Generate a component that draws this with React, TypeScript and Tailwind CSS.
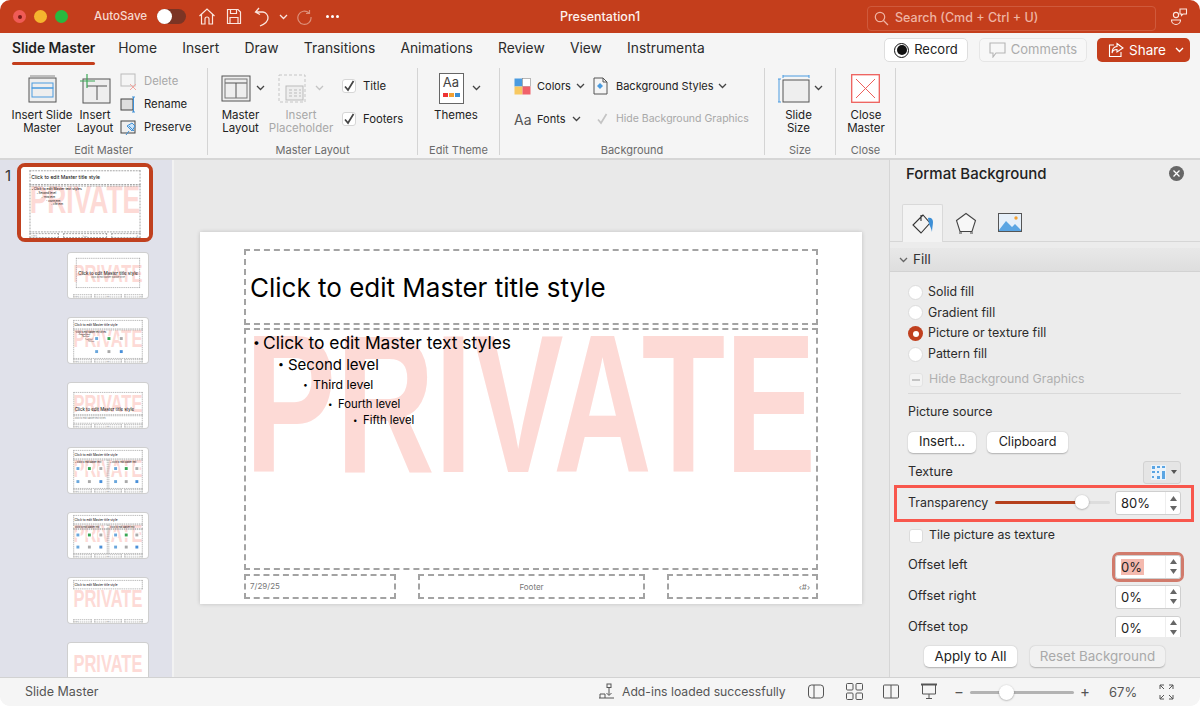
import React, { createContext, useContext } from "react";

const BorderW = createContext(2);

const Chev = ({ c = "#444", className = "" }: { c?: string; className?: string }) => (
  <svg width="9" height="6" viewBox="0 0 9 6" className={className}><path d="M1 1l3.5 3.5L8 1" fill="none" stroke={c} strokeWidth="1.3" /></svg>
);

const Big = ({ w, icon, lines, gray }: { w: number; icon: React.ReactNode; lines: string[]; gray?: boolean }) => (
  <div className="flex flex-col items-center shrink-0" style={{ width: w }}>
    <div className="h-[38px] shrink-0 flex items-center justify-center relative w-full">
      <div className="-mt-[3px] flex items-center justify-center">{icon}</div>
    </div>
    <div className={`text-[11.5px] leading-[13px] text-center whitespace-nowrap ${gray ? "text-[#a8a8a8]" : "text-[#222]"}`}>
      {lines.map((l) => <div key={l}>{l}</div>)}
    </div>
  </div>
);

const Group = ({ w, label, children }: { w: number; label: string; children: React.ReactNode }) => (
  <div className="flex shrink-0 h-full" style={{ width: w }}>
    <div className="flex flex-col flex-1 min-w-0">
      <div className="flex flex-1 min-h-0 pt-[3px]">{children}</div>
      <div className="h-[19px] text-[11px] leading-[23px] text-center text-[#6b6b6b]">{label}</div>
    </div>
    <div className="w-px bg-[#d4d4d4] mb-[3px] shrink-0" />
  </div>
);

const Watermark = () => (
  <div className="absolute left-[45px] top-[63px] text-[196px] leading-[220px] font-bold text-[#fddad6] origin-left scale-x-[0.696] whitespace-nowrap font-['Liberation_Sans',sans-serif]">PRIVATE</div>
);

const Box = ({ x, y, w, h, children }: { x: number; y: number; w: number; h: number; children?: React.ReactNode }) => {
  const bw = useContext(BorderW);
  return <div className="absolute border-dashed border-[#a3a3a3]" style={{ left: x, top: y, width: w, height: h, borderWidth: bw }}>{children}</div>;
};

const Footers = () => (
  <>
    <Box x={44} y={342} w={152} h={25}><div className="absolute left-[4px] top-[4px] text-[8px] leading-[12px] text-[#777]">7/29/25</div></Box>
    <Box x={218} y={342} w={227} h={25}><div className="text-center mt-[5px] text-[8px] leading-[12px] text-[#777]">Footer</div></Box>
    <Box x={467} y={342} w={151} h={25}><div className="absolute right-[6px] top-[5px] text-[8px] leading-[12px] text-[#777]">‹#›</div></Box>
  </>
);

const Lvl = ({ x, y, size, lh, t }: { x: number; y: number; size: number; lh: number; t: string }) => (
  <div className="absolute flex items-center whitespace-nowrap" style={{ left: x, top: y, fontSize: size, lineHeight: `${lh}px` }}>
    <span className="w-[10px] shrink-0 text-[0.7em]">•</span><span>{t}</span>
  </div>
);

const Body = () => (
  <div className="text-black relative">
    <Lvl x={7} y={0} size={17.4} lh={26} t="Click to edit Master text styles" />
    <Lvl x={32} y={24} size={15} lh={22} t="Second level" />
    <Lvl x={57} y={45} size={12.3} lh={20} t="Third level" />
    <Lvl x={82} y={65} size={11.3} lh={18} t="Fourth level" />
    <Lvl x={107} y={81} size={11.3} lh={18} t="Fifth level" />
  </div>
);

const Title = () => (
  <div className="absolute left-[4px] top-1/2 -translate-y-1/2 whitespace-nowrap text-black text-[26px]">Click to edit Master title style</div>
);

const IconGrid = ({ x, y, gap, rowGap }: { x: number; y: number; gap: number; rowGap: number }) => (
  <>
    {["#6aa7dc", "#3aa655", "#aaa", "#6aa7dc", "#aaa", "#4a90d9"].map((c, i) => (
      <div key={i} className="absolute w-[44px] h-[44px] rounded-[6px] bg-white flex items-center justify-center" style={{ left: x + (i % 3) * gap, top: y + Math.floor(i / 3) * rowGap }}>
        <div className="w-[24px] h-[24px]" style={{ background: c }} />
      </div>
    ))}
  </>
);

const Slide = ({ v }: { v: string }) => (
  <div className="w-[662px] h-[372px] relative bg-white overflow-hidden">
    <Watermark />
    {v === "master" && (
      <>
        <Box x={44} y={17} w={574} h={76}><Title /></Box>
        <Box x={44} y={96} w={574} h={242}><Body /></Box>
        <Footers />
      </>
    )}
    {v === "title" && (
      <>
        <Box x={66} y={41} w={530} h={248}>
          <div className="absolute left-0 right-0 top-[98px] text-center text-[36px] leading-[44px] text-black whitespace-nowrap">Click to edit Master title style</div>
          <div className="absolute left-0 right-0 top-[143px] text-center text-[18px] leading-[24px] text-[#555]">Click to edit Master subtitle style</div>
        </Box>
        <Footers />
      </>
    )}
    {v === "content" && (
      <>
        <Box x={44} y={17} w={574} h={76}><Title /></Box>
        <Box x={44} y={96} w={574} h={242}><Body /></Box>
        <IconGrid x={215} y={148} gap={102} rowGap={108} />
        <Footers />
      </>
    )}
    {v === "section" && (
      <>
        <Box x={45} y={75} w={573} h={190}><div className="absolute left-[4px] top-[116px] text-[36px] leading-[44px] text-black whitespace-nowrap">Click to edit Master title style</div></Box>
        <Box x={45} y={268} w={573} h={68}><div className="absolute left-[4px] top-[6px] text-[18px] leading-[24px] text-[#777]">Click to edit Master text styles</div></Box>
        <Footers />
      </>
    )}
    {v === "two" && (
      <>
        <Box x={44} y={17} w={574} h={76}><Title /></Box>
        <Box x={44} y={96} w={284} h={242}><div className="absolute left-[8px] top-[4px] text-[18px] leading-[24px] text-black whitespace-nowrap">• Click to edit Master text</div></Box>
        <Box x={335} y={96} w={283} h={242}><div className="absolute left-[8px] top-[4px] text-[18px] leading-[24px] text-black whitespace-nowrap">• Click to edit Master text</div></Box>
        <IconGrid x={60} y={148} gap={95} rowGap={108} />
        <IconGrid x={372} y={148} gap={88} rowGap={108} />
        <Footers />
      </>
    )}
    {v === "compare" && (
      <>
        <Box x={44} y={17} w={574} h={76}><Title /></Box>
        <Box x={44} y={96} w={284} h={36}><div className="absolute left-[8px] top-[2px] text-[18px] leading-[24px] text-black whitespace-nowrap">Click to edit Master text</div></Box>
        <Box x={335} y={96} w={283} h={36}><div className="absolute left-[8px] top-[2px] text-[18px] leading-[24px] text-black whitespace-nowrap">Click to edit Master text</div></Box>
        <Box x={44} y={134} w={284} h={204} />
        <Box x={335} y={134} w={283} h={204} />
        <IconGrid x={60} y={160} gap={95} rowGap={100} />
        <IconGrid x={372} y={160} gap={88} rowGap={100} />
        <Footers />
      </>
    )}
    {v === "only" && (
      <>
        <Box x={44} y={17} w={574} h={76}><Title /></Box>
        <Footers />
      </>
    )}
  </div>
);

const Thumb = ({ v }: { v: string }) => (
  <div className="relative w-[80px] h-[45px] rounded-[3px] overflow-hidden ring-1 ring-[#cfcfcf] ml-[68px] mb-[20px] shrink-0">
    <div className="absolute left-0 top-0 origin-top-left scale-[0.1208]">
      <BorderW.Provider value={6}><Slide v={v} /></BorderW.Provider>
    </div>
  </div>
);

const Spin = ({ v, sel }: { v: string; sel?: boolean }) => (
  <div className="w-[66px] h-[24px] bg-white rounded-[3px] border border-[#cfcfcf] flex items-center pl-[5px] shrink-0">
    <span className={`text-[13px] leading-[16px] text-[#222] ${sel ? "bg-[#f4b9ae] pr-[2px]" : ""}`}>{v}</span>
    <div className="ml-auto w-[15px] h-full flex flex-col items-center justify-center gap-[5px] border-l border-[#eee]">
      <svg width="7" height="5" viewBox="0 0 7 5"><path d="M3.5 0L7 5H0z" fill="#666" /></svg>
      <svg width="7" height="5" viewBox="0 0 7 5"><path d="M3.5 5L7 0H0z" fill="#666" /></svg>
    </div>
  </div>
);

const Radio = ({ label, on }: { label: string; on?: boolean }) => (
  <div className="h-[20.67px] flex items-center">
    {on ? (
      <div className="w-[15px] h-[15px] rounded-full bg-[#c0401f] flex items-center justify-center"><div className="w-[6px] h-[6px] rounded-full bg-white" /></div>
    ) : (
      <div className="w-[15px] h-[15px] rounded-full bg-white border border-[#dcdcdc]" />
    )}
    <span className="ml-[5px] text-[12.4px] text-[#2b2b2b]">{label}</span>
  </div>
);

const Btn = ({ children, w, gray, size = 13.2 }: { children: React.ReactNode; w: number; gray?: boolean; size?: number }) => (
  <div className={`h-[21px] rounded-[5px] flex items-center justify-center shrink-0 shadow-[0_0.5px_1.5px_rgba(0,0,0,0.25)] ${gray ? "bg-[#f1f1f1] text-[#a9a9a9]" : "bg-white text-[#222]"}`} style={{ width: w, fontSize: size }}>{children}</div>
);

const Check = ({ gray }: { gray?: boolean }) => (
  <div className={`w-[14px] h-[14px] rounded-[3px] border flex items-center justify-center shrink-0 ${gray ? "border-transparent" : "border-[#d6d6d6] bg-white"}`}>
    <svg width="12" height="12" viewBox="0 0 12 12"><path d="M2 6.5l3 3.5L10.5 1" fill="none" stroke={gray ? "#c4c4c4" : "#444"} strokeWidth="1.7" /></svg>
  </div>
);

const SmallRow = ({ icon, label, gray }: { icon: React.ReactNode; label: string; gray?: boolean }) => (
  <div className="h-[23px] flex items-center">
    <div className="w-[17px] h-[17px] shrink-0">{icon}</div>
    <span className={`ml-[7px] text-[11.3px] ${gray ? "text-[#a8a8a8]" : "text-[#222]"}`}>{label}</span>
  </div>
);

export default function App() {
  const tabs = ["Home", "Insert", "Draw", "Transitions", "Animations", "Review", "View", "Instrumenta"];
  return (
    <div className="w-[1200px] h-[706px] bg-white font-['Inter',sans-serif]">
      <div className="w-full h-full rounded-[10px] overflow-hidden flex flex-col bg-[#f5f5f5]">
        {/* Title bar */}
        <div className="h-[33px] bg-[#c43e1c] flex items-center shrink-0 relative pl-[13px]">
          <div className="w-[13px] h-[13px] rounded-full bg-[#ef5b56] flex items-center justify-center"><div className="w-[4px] h-[4px] rounded-full bg-[#7d1a17]" /></div>
          <div className="w-[13px] h-[13px] rounded-full bg-[#f5b52e] ml-[8px]" />
          <div className="w-[13px] h-[13px] rounded-full bg-[#28b83f] ml-[8px]" />
          <span className="ml-[26px] w-[52px] text-[11.6px] font-medium text-[#f6d9cf]">AutoSave</span>
          <div className="ml-[11px] w-[29px] h-[15px] rounded-full bg-[#7c3424] relative shrink-0"><div className="absolute left-0 top-0 w-[15px] h-[15px] rounded-full bg-white" /></div>
          <svg className="ml-[12px]" width="18" height="19" viewBox="0 0 18 19" fill="none" stroke="#fbe6df" strokeWidth="1.2"><path d="M1.5 9L9 2l7.5 7M3.5 7.5V17h3.5v-5a2 2 0 014 0v5h3.5V7.5" /></svg>
          <svg className="ml-[10px]" width="16" height="17" viewBox="0 0 16 17" fill="none" stroke="#fbe6df" strokeWidth="1.2"><path d="M1.5 1.5h10.5l2.5 2.5v11.5h-13zM4.5 1.5v4h6v-4M4 15.5V9.5h8v6" /></svg>
          <svg className="ml-[12px]" width="17" height="20" viewBox="0 0 17 20" fill="none" stroke="#fbe6df" strokeWidth="1.3"><path d="M5 1L1.5 5 6 7.5M2 5h7a6 6 0 015 6c0 3-3 6-8 8" /></svg>
          <Chev c="#fbe6df" className="ml-[8px]" />
          <svg className="ml-[8px]" width="16" height="16" viewBox="0 0 16 16" fill="none" stroke="#dd8f79" strokeWidth="1.2"><path d="M13 4a6.6 6.6 0 10 2 4M13.5 1v3.5H10" /></svg>
          <div className="ml-[14px] flex gap-[2px]"><i className="w-[3px] h-[3px] rounded-full bg-white" /><i className="w-[3px] h-[3px] rounded-full bg-white" /><i className="w-[3px] h-[3px] rounded-full bg-white" /></div>
          <div className="absolute left-[560px] top-[8px] text-[12.5px] leading-[17px] font-medium text-[#fdf1ed]">Presentation1</div>
          <div className="absolute right-[44px] top-[6px] w-[289px] h-[25px] rounded-[4px] border border-[#cf5a3c] flex items-center pl-[6px]">
            <svg width="15" height="15" viewBox="0 0 15 15" fill="none" stroke="#efb4a3" strokeWidth="1.2"><circle cx="6" cy="6" r="4.7" /><path d="M9.5 9.5l4.5 4.5" /></svg>
            <span className="ml-[6px] text-[12.5px] font-medium text-[#efb4a3]">Search (Cmd + Ctrl + U)</span>
          </div>
          <svg className="absolute right-[12px] top-[7px]" width="18" height="19" viewBox="0 0 18 19" fill="none" stroke="#fbe6df" strokeWidth="1.1"><circle cx="6" cy="8" r="2.6" /><path d="M1.5 13h9a4.5 4.5 0 01-9 0zM10 2h6.5v5H13l-1.5 1.5V7H10z" /></svg>
        </div>

        {/* Tabs */}
        <div className="h-[33px] flex items-center shrink-0 pl-[12px] relative">
          <div className="h-full relative flex items-center text-[13.85px] font-semibold text-[#1f1f1f] -mt-[3px]">
            Slide Master
            <div className="absolute left-0 right-0 bottom-0 h-[3px] rounded-full bg-[#c43e1c]" />
          </div>
          <div className="flex gap-[25.2px] ml-[23px] text-[13.8px] text-[#2b2b2b] -mt-[3px]">
            {tabs.map((t) => <span key={t}>{t}</span>)}
          </div>
          <div className="absolute left-[884px] top-[5px] w-[84px] h-[24px] rounded-[5px] bg-white border border-[#dedede] flex items-center justify-center gap-[5px]">
            <div className="w-[15px] h-[15px] rounded-full border border-[#111] flex items-center justify-center"><div className="w-[10px] h-[10px] rounded-full bg-[#111]" /></div>
            <span className="text-[13px] text-[#222]">Record</span>
          </div>
          <div className="absolute left-[979px] top-[5px] w-[108px] h-[24px] rounded-[5px] bg-[#f7f7f7] border border-[#e6e6e6] flex items-center justify-center gap-[5px]">
            <svg width="17" height="16" viewBox="0 0 17 16" fill="none" stroke="#b5b5b5" strokeWidth="1.1"><path d="M1 1h15v10H7l-3 4v-4H1z" /></svg>
            <span className="text-[13px] text-[#ababab]">Comments</span>
          </div>
          <div className="absolute left-[1097px] top-[5px] w-[93px] h-[24px] rounded-[5px] bg-[#c43e1c] flex items-center pl-[11px] gap-[4px]">
            <svg width="17" height="16" viewBox="0 0 17 16" fill="none" stroke="#fff" strokeWidth="1.1"><path d="M6 3H1.5v11.5H13V10M9 1.5l6 4.5-6 4V7.5C6 7.5 4.5 9 4 11c0-4 2-6.5 5-6.5z" /></svg>
            <span className="text-[13.5px] text-white">Share</span>
            <Chev c="#fff" className="ml-[5px]" />
          </div>
        </div>

        {/* Ribbon */}
        <div className="h-[94px] flex shrink-0 border-b-2 border-[#d6d6d6] pt-[2px]">
          <Group w={208} label="Edit Master">
            <div className="ml-[12px]" />
            <Big w={60} lines={["Insert Slide", "Master"]} icon={
              <svg width="29" height="28" viewBox="0 0 29 28" fill="none"><path d="M2 1h25" stroke="#888" /><rect x="1" y="3" width="27" height="24" fill="#eee" stroke="#555" /><rect x="4" y="8" width="21" height="5" fill="none" stroke="#4a9be0" /><rect x="4" y="13" width="21" height="9" fill="none" stroke="#4a9be0" /></svg>
            } />
            <div className="w-[5px]" />
            <Big w={36} lines={["Insert", "Layout"]} icon={
              <svg width="32" height="30" viewBox="0 0 32 30" fill="none"><rect x="4" y="5" width="27" height="24" fill="#eee" stroke="#555" /><path d="M8 12h20M18 12v14" stroke="#555" /><path d="M8 0v14M1 7h15" stroke="#3aa655" strokeWidth="1.2" /></svg>
            } />
            <div className="ml-[7px] flex flex-col -mt-[1px]">
              <SmallRow gray label="Delete" icon={<svg width="17" height="17" viewBox="0 0 17 17" fill="none"><rect x="1" y="1" width="14" height="12" stroke="#bbb" /><path d="M10 11l6 6M16 11l-6 6" stroke="#f3a7a0" /></svg>} />
              <SmallRow label="Rename" icon={<svg width="17" height="17" viewBox="0 0 17 17" fill="none"><rect x="1" y="3" width="12" height="11" fill="#ddd" stroke="#444" /><path d="M12 1h3M13.5 1v15M12 16h3" stroke="#3d8fd6" /></svg>} />
              <SmallRow label="Preserve" icon={<svg width="17" height="17" viewBox="0 0 17 17" fill="none"><rect x="1" y="2" width="14" height="12" fill="#eee" stroke="#444" /><path d="M6 16l3-4M9 7l5 5M12 4l3 3-3 5-5-5z" stroke="#3d8fd6" fill="#cfe4f7" /></svg>} />
            </div>
          </Group>
          <Group w={210} label="Master Layout">
            <div className="w-[9px]" />
            <div className="relative">
              <Big w={47} lines={["Master", "Layout"]} icon={
                <svg width="30" height="27" viewBox="0 0 30 27" fill="none" className="mr-[9px]"><rect x="1" y="1" width="28" height="25" fill="#eee" stroke="#555" /><path d="M4 8h22M15 8v15" stroke="#555" /><rect x="4" y="4" width="22" height="19" stroke="#777" /></svg>
              } />
              <Chev className="absolute left-[39px] top-[14px]" />
            </div>
            <div className="w-[6px]" />
            <div className="relative">
              <Big w={62} gray lines={["Insert", "Placeholder"]} icon={
                <svg width="28" height="30" viewBox="0 0 28 30" fill="none" className="mr-[18px]"><rect x="1" y="1" width="26" height="27" stroke="#c5c5c5" strokeDasharray="3 2" /><rect x="8" y="12" width="17" height="14" fill="#eee" stroke="#bbb" /><path d="M11 16h3M16 16h3M21 16h2M11 19h3M16 19h3M21 19h2M11 22h3M16 22h3M21 22h2" stroke="#bbb" /></svg>
              } />
              <Chev c="#c4c4c4" className="absolute left-[45px] top-[14px]" />
            </div>
            <div className="ml-[10px] flex flex-col pt-[5px]">
              <div className="h-[20px] flex items-center"><Check /><span className="ml-[7px] text-[11.3px] text-[#222]">Title</span></div>
              <div className="h-[20px] mt-[13px] flex items-center"><Check /><span className="ml-[7px] text-[11.3px] text-[#222]">Footers</span></div>
            </div>
          </Group>
          <Group w={82} label="Edit Theme">
            <div className="w-[20px]" />
            <div className="relative">
              <Big w={36} lines={["Themes"]} icon={
                <div className="w-[25px] h-[31px] bg-white border border-[#666] flex flex-col items-center mr-[10px]">
                  <span className="text-[13px] leading-[17px] text-[#444]">Aa</span>
                  <div className="flex gap-[1px] mt-[2px]"><i className="w-[5px] h-[4px] bg-[#e33]" /><i className="w-[5px] h-[4px] bg-[#f3a032]" /><i className="w-[5px] h-[4px] bg-[#3d8fd6]" /></div>
                </div>
              } />
              <Chev className="absolute left-[34px] top-[14px]" />
            </div>
          </Group>
          <Group w={265} label="Background">
            <div className="pl-[14px] pt-[5px] flex flex-col w-full">
              <div className="h-[20px] flex items-center">
                <svg width="17" height="17" viewBox="0 0 17 17"><rect width="8" height="8" x=".5" y=".5" fill="#4a9be0" /><rect width="8" height="8" x="8.5" y=".5" fill="#fff" stroke="#777" strokeWidth=".5" /><rect width="8" height="8" x=".5" y="8.5" fill="#f7c860" /><rect width="8" height="8" x="8.5" y="8.5" fill="#f0616a" /></svg>
                <span className="ml-[6px] w-[37px] text-[11px] text-[#222]">Colors</span>
                <Chev className="ml-[2px]" />
                <svg className="ml-[8px]" width="15" height="18" viewBox="0 0 15 18" fill="none" stroke="#555"><path d="M1 1h9l4 4v12H1zM10 1v4h4" /><path d="M4 9l3-3 3 3-3 3z" fill="#4a9be0" stroke="none" /></svg>
                <span className="ml-[8px] text-[11px] text-[#222]">Background Styles</span>
                <Chev className="ml-[4px]" />
              </div>
              <div className="h-[20px] mt-[13px] flex items-center">
                <span className="w-[17px] text-[14px] text-[#555]">Aa</span>
                <span className="ml-[6px] w-[31px] text-[11px] text-[#222]">Fonts</span>
                <Chev className="ml-[4px]" />
                <div className="ml-[14px]"><Check gray /></div>
                <span className="ml-[7px] text-[10.5px] text-[#a8a8a8]">Hide Background Graphics</span>
              </div>
            </div>
          </Group>
          <Group w={71} label="Size">
            <div className="w-[13px]" />
            <div className="relative">
              <Big w={41} lines={["Slide", "Size"]} icon={
                <svg width="32" height="28" viewBox="0 0 32 28" fill="none" className="mr-[10px]"><path d="M5 1h26M5 0v3M31 0v3M1 4v23M0 4h3M0 27h3" stroke="#4a9be0" /><rect x="5" y="5" width="26" height="22" fill="#eee" stroke="#555" /></svg>
              } />
              <Chev className="absolute left-[36px] top-[14px]" />
            </div>
          </Group>
          <Group w={60} label="Close">
            <div className="ml-[7px]" />
            <Big w={46} lines={["Close", "Master"]} icon={
              <svg width="29" height="29" viewBox="0 0 29 29" fill="none" className="mr-[2px]"><rect x=".7" y=".7" width="27.6" height="27.6" fill="#fff" stroke="#ee5f5b" strokeWidth="1.3" /><path d="M5 5l19 19M24 5L5 24" stroke="#ee5f5b" /></svg>
            } />
          </Group>
        </div>

        {/* Main */}
        <div className="flex-1 min-h-0 flex">
          <div className="w-[172px] bg-[#e0e1ea] shrink-0 overflow-hidden relative pt-[3px]">
            <div className="absolute left-[5px] top-[7px] text-[15px] leading-[18px] text-[#333]">1</div>
            <div className="ml-[17px] w-[136px] h-[79px] rounded-[8px] border-[4px] border-[#c0401f] bg-white overflow-hidden mb-[11px] relative">
              <div className="absolute left-0 top-0 origin-top-left scale-[0.1934]">
                <BorderW.Provider value={5}><Slide v="master" /></BorderW.Provider>
              </div>
            </div>
            <Thumb v="title" />
            <Thumb v="content" />
            <Thumb v="section" />
            <Thumb v="two" />
            <Thumb v="compare" />
            <Thumb v="only" />
            <Thumb v="blank" />
          </div>
          <div className="w-[2px] bg-[#f2f2f2] shrink-0" />
          <div className="flex-1 bg-[#e9e9e9] flex items-center justify-center min-w-0 pr-[1px] pb-[1px]">
            <div className="shadow-[0_0_4px_rgba(0,0,0,0.18)]"><Slide v="master" /></div>
          </div>
          <div className="w-[311px] shrink-0 bg-[#ececec] border-l border-[#d6d6d6] flex flex-col">
            <div className="h-[44px] shrink-0 flex items-start pt-[4px] pl-[16px] pr-[16px] justify-between">
              <span className="text-[15px] leading-[20px] font-medium text-[#222]">Format Background</span>
              <div className="w-[15px] h-[15px] rounded-full bg-[#666] flex items-center justify-center mt-[2px]">
                <svg width="7" height="7" viewBox="0 0 7 7"><path d="M.5.5l6 6M6.5.5l-6 6" stroke="#fff" strokeWidth="1.3" /></svg>
              </div>
            </div>
            <div className="h-[38px] shrink-0 flex border-b border-[#d6d6d6] pl-[12px]">
              <div className="w-[41px] h-[38px] bg-[#f3f3f3] border border-b-0 border-[#d9d9d9] rounded-t-[2px] flex items-center justify-center">
                <svg width="24" height="24" viewBox="0 0 24 24" fill="none"><path d="M12 3L2 13l8 8 9-10zM10 3v6" stroke="#333" strokeWidth="1.1" /><path d="M17 6c3-1 5 1 5 4 0 3-1 6-1 10-1-4-2-6-3-8z" fill="#3d8fd6" /></svg>
              </div>
              <div className="w-[46px] flex items-center justify-center">
                <svg width="22" height="22" viewBox="0 0 22 22" fill="none" stroke="#444" strokeWidth="1.1"><path d="M11 1.5l9.5 7-3.5 11H5l-3.5-11z" fill="#f7f7f7" /><path d="M4 21h3M15 21h3" /></svg>
              </div>
              <div className="w-[42px] flex items-center justify-center">
                <svg width="24" height="19" viewBox="0 0 24 19"><rect x=".5" y=".5" width="23" height="18" fill="#e6f0fa" stroke="#555" /><path d="M1 17l7-9 6 6 3-3 6 6v1H1z" fill="#5aa5e3" /><circle cx="18" cy="5" r="1.7" fill="#f3a032" /></svg>
              </div>
            </div>
            <div className="h-[24px] mt-[6px] shrink-0 bg-gradient-to-b from-[#e8e8e8] to-[#dedede] border-b border-[#d2d2d2] flex items-center pl-[9px]">
              <Chev c="#666" />
              <span className="ml-[5px] text-[13.5px] text-[#333]">Fill</span>
            </div>
            <div className="flex-1 min-h-0 overflow-hidden pl-[18px] pr-[19px] pt-[10px] relative">
              <Radio label="Solid fill" />
              <Radio label="Gradient fill" />
              <Radio on label="Picture or texture fill" />
              <Radio label="Pattern fill" />
              <div className="h-[20px] mt-[5px] flex items-center ml-[1px]">
                <div className="w-[14px] h-[14px] rounded-[3px] bg-[#f3f3f3] border border-[#e3e3e3] flex items-center justify-center"><div className="w-[8px] h-[2px] bg-[#c4c4c4]" /></div>
                <span className="ml-[6px] text-[12.3px] text-[#b0b0b0]">Hide Background Graphics</span>
              </div>
              <div className="h-px mt-[3px] bg-[#d9d9d9]" />
              <div className="h-[20px] mt-[9px] flex items-center text-[12.4px] text-[#2b2b2b]">Picture source</div>
              <div className="flex gap-[11px] mt-[9px]"><Btn w={68} size={13}>Insert...</Btn><Btn w={81} size={12.6}>Clipboard</Btn></div>
              <div className="h-[23px] mt-[8px] flex items-center justify-between">
                <span className="text-[12.6px] text-[#2b2b2b]">Texture</span>
                <div className="w-[38px] h-[23px] bg-[#e5e5e5] border border-[#d2d2d2] rounded-[3px] flex items-center pl-[7px] gap-[5px]">
                  <svg width="15" height="15" viewBox="0 0 15 15"><rect width="15" height="15" fill="#eaf3fb" /><path d="M1 1h3v3H1zM6 1h3v2H6zM11 1h3v2h-3zM1 6h3v2H1zM6 6h2v2H6zM1 11h2v2H1zM6 11h3v3H6zM11 6h3v8h-3z" fill="#5aa5e3" /></svg>
                  <svg width="6" height="4" viewBox="0 0 6 4"><path d="M0 0h6L3 4z" fill="#555" /></svg>
                </div>
              </div>
              <div className="h-[37px] mt-[1px] -ml-[14px] w-[300px] border-[3px] border-[#f8574d] flex items-center pl-[11px] pr-[10px]">
                <span className="text-[12.4px] text-[#2b2b2b] w-[87px]">Transparency</span>
                <div className="w-[115px] h-[3px] relative bg-[#dddddd] rounded-full -mt-[2px]">
                  <div className="absolute left-0 top-0 h-full w-[87px] bg-[#b5401c] rounded-full" />
                  <div className="absolute left-[80px] -top-[6px] w-[14px] h-[14px] rounded-full bg-white shadow-[0_0.5px_2px_rgba(0,0,0,0.35)]" />
                </div>
                <div className="ml-auto"><Spin v="80%" /></div>
              </div>
              <div className="h-[18px] mt-[5px] flex items-center ml-[1px]">
                <div className="w-[14px] h-[14px] rounded-[3px] bg-white border border-[#dcdcdc]" />
                <span className="ml-[6px] text-[12.3px] text-[#2b2b2b]">Tile picture as texture</span>
              </div>
              <div className="h-[24px] mt-[10px] flex items-center justify-between">
                <span className="text-[12.8px] text-[#2b2b2b] pb-[5px]">Offset left</span>
                <div className="rounded-[4px] ring-[3px] ring-[#d17b6c]"><Spin v="0%" sel /></div>
              </div>
              <div className="h-[24px] mt-[6px] flex items-center justify-between">
                <span className="text-[12.8px] text-[#2b2b2b] pb-[3px]">Offset right</span>
                <Spin v="0%" />
              </div>
              <div className="h-[24px] mt-[7px] flex items-center justify-between">
                <span className="text-[12.8px] text-[#2b2b2b] pb-[3px]">Offset top</span>
                <Spin v="0%" />
              </div>
            </div>
            <div className="h-[40px] shrink-0 flex gap-[13px] pl-[34px] pt-[9px]">
              <Btn w={93} size={13.4}>Apply to All</Btn>
              <Btn w={135} size={13.4} gray>Reset Background</Btn>
            </div>
          </div>
        </div>

        {/* Status bar */}
        <div className="h-[29px] shrink-0 bg-[#f5f5f5] border-t border-[#d2d2d2] flex items-center relative text-[#555] text-[12.5px]">
          <span className="ml-[25px]">Slide Master</span>
          <svg className="absolute left-[598px] top-[5px]" width="18" height="18" viewBox="0 0 18 18" fill="none" stroke="#555"><rect x="9" y="1" width="4" height="3.5" /><path d="M11 5v7M8.5 10l2.5 2.5 2.5-2.5M1 15h15M2 15v-4h5v4" /></svg>
          <span className="absolute left-[622px] top-[5px] text-[12.2px] leading-[18px]">Add-ins loaded successfully</span>
          <svg className="absolute left-[808px] top-[6px]" width="16" height="15" viewBox="0 0 16 15" fill="none" stroke="#555"><rect x=".5" y="1" width="15" height="13" rx="3" /><path d="M6 1v13" /></svg>
          <svg className="absolute left-[846px] top-[5px]" width="17" height="17" viewBox="0 0 17 17" fill="none" stroke="#555"><rect x=".5" y=".5" width="6.5" height="6.5" rx="1" /><rect x="10" y=".5" width="6.5" height="6.5" rx="1" /><rect x=".5" y="10" width="6.5" height="6.5" rx="1" /><rect x="10" y="10" width="6.5" height="6.5" rx="1" /></svg>
          <svg className="absolute left-[883px] top-[6px]" width="16" height="15" viewBox="0 0 16 15" fill="none" stroke="#555"><rect x=".5" y="1" width="15" height="13" rx="1" /><path d="M8 1v13" /></svg>
          <svg className="absolute left-[921px] top-[5px]" width="16" height="17" viewBox="0 0 16 17" fill="none" stroke="#555"><path d="M0 1.5h16" strokeWidth="2" /><path d="M1.5 2v9h13V2M8 11v4M5 15.5h6" /></svg>
          <span className="absolute left-[954px] top-[5px] leading-[18px] text-[15px]">−</span>
          <div className="absolute left-[970px] top-[13px] w-[104px] h-[3px] bg-[#b3b3b3] rounded-full" />
          <div className="absolute left-[999px] top-[7px] w-[15px] h-[15px] rounded-full bg-white shadow-[0_0.5px_2px_rgba(0,0,0,0.35)]" />
          <span className="absolute left-[1080px] top-[5px] leading-[18px] text-[15px]">+</span>
          <span className="absolute left-[1109px] top-[5px] leading-[18px] text-[13px]">67%</span>
          <svg className="absolute left-[1159px] top-[6px]" width="15" height="16" viewBox="0 0 15 16" fill="none" stroke="#555"><path d="M1 5V1h4M14 5V1h-4M1 11v4h4M14 11v4h-4M1 1l4 4M14 1l-4 4M1 15l4-4M14 15l-4-4" /></svg>
        </div>
      </div>
    </div>
  );
}
